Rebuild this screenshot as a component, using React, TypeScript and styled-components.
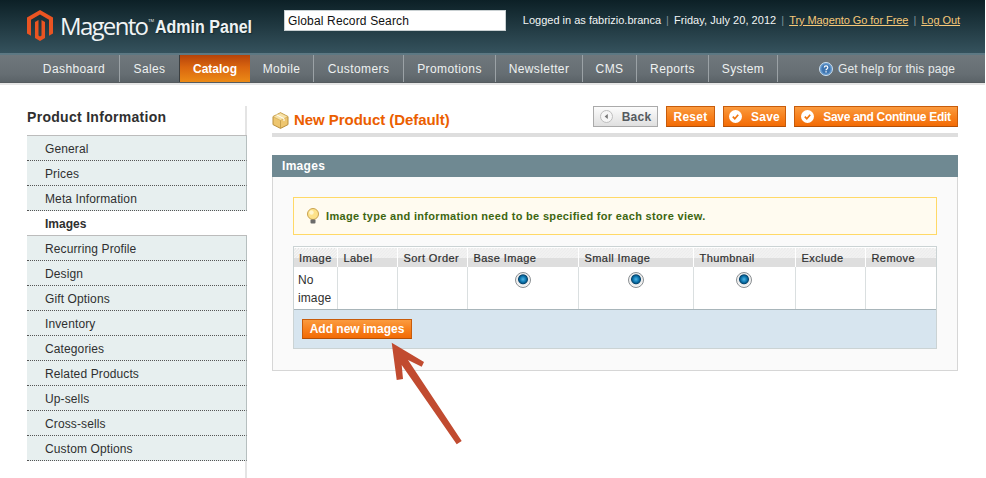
import React from 'react';
import styled, { createGlobalStyle } from 'styled-components';

const GlobalStyle = createGlobalStyle`
    html, body {
        margin: 0;
        padding: 0;
        height: 478px;
        overflow: hidden;
        background: #fff;
        font-family: 'Liberation Sans', Arial, sans-serif;
        font-size: 12px;
        color: #2f2f2f;
    }
`;

const Page = styled.div`
    position: relative;
    width: 985px;
    height: 478px;
    overflow: hidden;
`;

const Header = styled.header`
    height: 53px;
    display: flex;
    align-items: flex-start;
    padding: 0 25px 0 27px;
    background: linear-gradient(#0c2026, #35525d);
`;

const Brand = styled.div`
    width: 257px;
    flex: none;
    height: 53px;
    display: flex;
    align-items: flex-start;
    padding-top: 10px;
    box-sizing: border-box;
`;

const Wordmark = styled.span`
    width: 92px;
    flex: none;
    margin-left: 7px;
    margin-top: 1px;
    font-family: 'Open Sans', sans-serif;
    font-size: 24px;
    line-height: 30px;
    letter-spacing: -1.7px;
    color: #f1f4f5;
    white-space: nowrap;
    sup {
        font-size: 4px;
        line-height: 0;
        vertical-align: 13px;
        letter-spacing: 0;
        margin-left: 1px;
    }
`;

const PanelName = styled.span`
    margin-left: 3px;
    margin-top: 4px;
    font-size: 18px;
    line-height: 26px;
    font-weight: bold;
    color: #eef2f3;
    text-shadow: 1px 1px 1px #142a30;
    display: inline-block;
    transform: scaleX(0.89);
    transform-origin: left center;
    white-space: nowrap;
`;

const SearchBox = styled.div`
    width: 222px;
    flex: none;
    height: 21px;
    margin-top: 10px;
    box-sizing: border-box;
    padding-left: 3px;
    background: #fff;
    border: 1px solid #c9d0d2;
    color: #111;
    font-size: 12px;
    line-height: 20px;
    letter-spacing: 0.15px;
`;

const UserInfo = styled.div`
    margin-left: auto;
    margin-top: 13px;
    display: flex;
    gap: 4px;
    font-size: 11px;
    line-height: 14px;
    color: #f2f5f5;
    white-space: nowrap;
`;

const DateText = styled.span`
    letter-spacing: 0.05px;
`;

const Pipe = styled.span`
    color: #7f9198;
    padding: 0 1px;
`;

const TopLink = styled.a`
    color: #f6c878;
    text-decoration: underline;
    letter-spacing: -0.06px;
`;

const NavBar = styled.nav`
    height: 27px;
    border-top: 2px solid #5d7883;
    display: flex;
    align-items: stretch;
    padding-left: 29px;
    padding-right: 30px;
    background: linear-gradient(#6f777c, #666e73 70%, #5a6267);
    box-shadow: 0 1px 0 #555b5f, 0 3px 0 #e6e6e6;
`;

const NavItem = styled.a<{ $active?: boolean; $w: number }>`
    width: ${(p) => p.$w}px;
    box-sizing: border-box;
    display: flex;
    align-items: center;
    justify-content: center;
    font-size: 12px;
    letter-spacing: 0.4px;
    color: #eef1f1;
    border-right: 1px solid #9ba2a6;
    ${(p) =>
        p.$active &&
        `
        border-right: none;
        box-shadow: -1px 0 0 #3b3f41;
        font-weight: bold;
        color: #fff;
        letter-spacing: 0;
        background: linear-gradient(#b5430a, #d9650f 45%, #ec8a16);
    `}
`;

const HelpLink = styled.a`
    margin-left: auto;
    display: flex;
    align-items: center;
    gap: 5px;
    font-size: 12px;
    letter-spacing: 0.1px;
    color: #e6eaeb;
`;

const Body = styled.div`
    display: flex;
    height: 396px;
    padding: 24px 27px 0;
    box-sizing: border-box;
    overflow: hidden;
`;

const Sidebar = styled.aside`
    width: 220px;
    flex: none;
    height: 400px;
    border-right: 2px solid #e4e4e4;
    box-sizing: border-box;
`;

const SideTitle = styled.h3`
    margin: 0 -2px 0 0;
    height: 29px;
    font-size: 14px;
    line-height: 22px;
    font-weight: bold;
    letter-spacing: 0.3px;
    color: #2f2f2f;
    border-bottom: 1px solid #bcbcbc;
`;

const SideList = styled.ul`
    list-style: none;
    margin: 0 -2px 0 0;
    padding: 0;
`;

const SideItem = styled.li<{ $active?: boolean }>`
    height: 25px;
    box-sizing: border-box;
    padding-left: 18px;
    line-height: 26px;
    font-size: 12px;
    letter-spacing: 0.12px;
    color: #2f2f2f;
    background: #e7efef;
    border-right: 1px solid #b6bfbf;
    border-bottom: 1px dotted #555;
    ${(p) =>
        p.$active &&
        `
        background: #fff;
        font-weight: bold;
        letter-spacing: 0;
        border-right: none;
        border-bottom: 1px solid #bcbcbc;
    `}
`;

const Main = styled.main`
    width: 686px;
    flex: none;
    margin-left: 25px;
`;

const TitleRow = styled.div`
    height: 27px;
    display: flex;
    align-items: flex-start;
    border-bottom: 4px solid #dedede;
`;

const PageTitle = styled.h1`
    margin: 3px 0 0;
    display: flex;
    align-items: center;
    gap: 5px;
    font-size: 15px;
    line-height: 22px;
    font-weight: bold;
    letter-spacing: -0.05px;
    color: #eb5e00;
`;

const Actions = styled.div`
    margin-left: auto;
    display: flex;
    gap: 8px;
`;

const OrangeButton = styled.button<{ $w: number; $h?: number; $ls?: number }>`
    width: ${(p) => p.$w}px;
    height: ${(p) => p.$h ?? 21}px;
    padding: 0;
    display: flex;
    align-items: center;
    justify-content: center;
    gap: 9px;
    font-family: inherit;
    font-size: 12px;
    font-weight: bold;
    letter-spacing: ${(p) => p.$ls ?? 0.22}px;
    color: #fff;
    border: 1px solid #c85c0b;
    border-bottom-color: #b34f06;
    background: linear-gradient(#fb9b3f, #f7811e 50%, #f36b05);
`;

const GreyButton = styled(OrangeButton)`
    color: #555a5f;
    border: 1px solid #aaa;
    background: linear-gradient(#fcfcfc, #dfdfdf);
`;

const SectionHead = styled.h4`
    margin: 18px 0 0;
    height: 22px;
    padding-left: 10px;
    font-size: 12px;
    line-height: 23px;
    font-weight: bold;
    letter-spacing: 0.3px;
    color: #fff;
    background: #6f8992;
`;

const Panel = styled.section`
    height: 194px;
    box-sizing: border-box;
    padding: 20px 20px 0;
    background: #fafafa;
    border: 1px solid #d6d6d6;
    border-top: none;
`;

const Notice = styled.div`
    height: 38px;
    box-sizing: border-box;
    display: flex;
    align-items: center;
    gap: 5px;
    padding-left: 11px;
    font-size: 11px;
    font-weight: bold;
    letter-spacing: 0.32px;
    color: #3d6611;
    background: #fffbf0;
    border: 1px solid #ffd967;
`;

const ImageBox = styled.div`
    margin-top: 11px;
    height: 103px;
    box-sizing: border-box;
    border: 1px solid #cbd3d4;
    display: flex;
    flex-direction: column;
`;

const ImageTable = styled.table`
    width: 642px;
    table-layout: fixed;
    border-collapse: collapse;
    background: #fff;
    font-size: 11px;
    letter-spacing: 0.42px;
`;

const HeadCell = styled.th`
    height: 19px;
    padding: 0 0 0 6px;
    border-left: 1px solid #fff;
    border-top: 1px solid #fff;
    text-align: left;
    font-weight: normal;
    font-size: 11px;
    color: #2f2f2f;
    -webkit-text-stroke: 0.2px #2f2f2f;
    background:
        linear-gradient(#dedede, #dedede) left bottom / 100% 9px no-repeat,
        repeating-linear-gradient(135deg, #f5f5f5 0 1.06px, #e4e4e4 1.06px 2.12px);
    &:first-child {
        border-left: none;
        padding-left: 5px;
    }
`;

const BodyCell = styled.td<{ $center?: boolean }>`
    height: 42px;
    padding: ${(p) => (p.$center ? '5px 0 0 0' : '4px 0 0 4px')};
    box-sizing: border-box;
    vertical-align: top;
    border-left: 1px solid #dadfe0;
    text-align: ${(p) => (p.$center ? 'center' : 'left')};
    line-height: 18px;
    font-size: 12px;
    letter-spacing: 0.1px;
    &:first-child {
        border-left: none;
    }
`;

const Radio = styled.span`
    display: inline-block;
    width: 16px;
    height: 16px;
    box-sizing: border-box;
    border-radius: 50%;
    border: 1px solid #8a8f92;
    background: radial-gradient(circle at 50% 45%, #4fb6e6 0, #0b74ad 3px, #07466f 4.5px, #e9e9e9 5.4px, #f5f5f5 7px);
`;

const TableFooter = styled.div`
    flex: 1;
    padding: 9px 0 0 8px;
    background: #d7e5ef;
    border-top: 1px solid #a8b5ba;
`;

const Arrow = styled.svg`
    position: absolute;
    left: 385px;
    top: 338px;
`;

const CheckIcon = () => (
    <svg width="13" height="13" viewBox="0 0 13 13">
        <circle cx="6.500" cy="6.500" r="6.500" fill="#fff" />
        <path d="M3.800 6.600l2 2.100 3.400-4" fill="none" stroke="#f0760f" strokeWidth="1.700" />
    </svg>
);

const navItems = [
    { name: 'Dashboard', width: 91 },
    { name: 'Sales', width: 60 },
    { name: 'Catalog', width: 70 },
    { name: 'Mobile', width: 64 },
    { name: 'Customers', width: 90 },
    { name: 'Promotions', width: 92 },
    { name: 'Newsletter', width: 87 },
    { name: 'CMS', width: 54 },
    { name: 'Reports', width: 72 },
    { name: 'System', width: 69 },
];
const sideItems = [
    'General',
    'Prices',
    'Meta Information',
    'Images',
    'Recurring Profile',
    'Design',
    'Gift Options',
    'Inventory',
    'Categories',
    'Related Products',
    'Up-sells',
    'Cross-sells',
    'Custom Options',
];
const columns = [
    { name: 'Image', width: 43 },
    { name: 'Label', width: 60 },
    { name: 'Sort Order', width: 70 },
    { name: 'Base Image', width: 111 },
    { name: 'Small Image', width: 115 },
    { name: 'Thumbnail', width: 102 },
    { name: 'Exclude', width: 70 },
    { name: 'Remove', width: 71 },
];

export default function App() {
    return (
        <Page>
            <GlobalStyle />
            <Header>
                <Brand>
                    <svg width="26" height="31" viewBox="0 0 26 31">
                        <path
                            fill="#ea5422"
                            d="M13 0l13 7.500v16l-4 2.300v-16l-9-5.200-9 5.200v16L0 23.500v-16zM8 12l3.500-2v15.500l1.500.9 1.500-.9V10l3.500 2v16l-5 3-5-3z"
                        />
                    </svg>
                    <Wordmark>
                        Magento<sup>TM</sup>
                    </Wordmark>
                    <PanelName>Admin Panel</PanelName>
                </Brand>
                <SearchBox>Global Record Search</SearchBox>
                <UserInfo>
                    <span>Logged in as fabrizio.branca</span>
                    <Pipe>|</Pipe>
                    <DateText>Friday, July 20, 2012</DateText>
                    <Pipe>|</Pipe>
                    <TopLink>Try Magento Go for Free</TopLink>
                    <Pipe>|</Pipe>
                    <TopLink>Log Out</TopLink>
                </UserInfo>
            </Header>
            <NavBar>
                {navItems.map((item) => (
                    <NavItem key={item.name} $w={item.width} $active={item.name === 'Catalog'}>
                        {item.name}
                    </NavItem>
                ))}
                <HelpLink>
                    <svg width="14" height="14" viewBox="0 0 14 14">
                        <circle cx="7" cy="7" r="6.500" fill="#5f94c9" stroke="#cfe0f0" />
                        <circle cx="7" cy="7" r="4.500" fill="#3f75b0" />
                        <path d="M5.300 5.600c0-2.200 3.500-2.200 3.500 0 0 1.300-1.800 1.300-1.800 2.600" fill="none" stroke="#fff" strokeWidth="1.200" />
                        <rect x="6.400" y="9.200" width="1.300" height="1.300" fill="#fff" />
                    </svg>
                    Get help for this page
                </HelpLink>
            </NavBar>
            <Body>
                <Sidebar>
                    <SideTitle>Product Information</SideTitle>
                    <SideList>
                        {sideItems.map((item) => (
                            <SideItem key={item} $active={item === 'Images'}>
                                {item}
                            </SideItem>
                        ))}
                    </SideList>
                </Sidebar>
                <Main>
                    <TitleRow>
                        <PageTitle>
                            <svg width="17" height="17" viewBox="0 0 17 17">
                                <path d="M8.500.8L16 4.600v8L8.500 16.400 1 12.600v-8z" fill="#eec66f" stroke="#b98f3c" />
                                <path d="M1 4.600l7.500 3.800L16 4.600 8.500.8z" fill="#f8e3a8" stroke="#c9a24f" strokeWidth="0.600" />
                                <path d="M8.500 8.400v8" stroke="#c9a24f" fill="none" />
                                <path d="M4.500 2.800l7.500 3.800v2.500" stroke="#fff" fill="none" />
                            </svg>
                            New Product (Default)
                        </PageTitle>
                        <Actions>
                            <GreyButton $w={65}>
                                <svg width="13" height="13" viewBox="0 0 13 13">
                                    <circle cx="6.500" cy="6.500" r="6" fill="#f6f6f6" stroke="#bdbdbd" />
                                    <path d="M7.800 4v5L4.600 6.500z" fill="#777" />
                                </svg>
                                Back
                            </GreyButton>
                            <OrangeButton $w={49}>Reset</OrangeButton>
                            <OrangeButton $w={63}>
                                <CheckIcon />
                                Save
                            </OrangeButton>
                            <OrangeButton $w={164} $ls={-0.3}>
                                <CheckIcon />
                                Save and Continue Edit
                            </OrangeButton>
                        </Actions>
                    </TitleRow>
                    <SectionHead>Images</SectionHead>
                    <Panel>
                        <Notice>
                            <svg width="16" height="16" viewBox="0 0 16 16">
                                <circle cx="8" cy="6" r="5.500" fill="#fde28a" stroke="#c9a24f" />
                                <circle cx="6.500" cy="4.500" r="2.200" fill="#fff6cf" />
                                <rect x="5.500" y="11.500" width="5" height="4" rx="1" fill="#6b6b6b" />
                            </svg>
                            Image type and information need to be specified for each store view.
                        </Notice>
                        <ImageBox>
                            <ImageTable>
                                <colgroup>
                                    {columns.map((col) => (
                                        <col key={col.name} width={col.width} />
                                    ))}
                                </colgroup>
                                <thead>
                                    <tr>
                                        {columns.map((col) => (
                                            <HeadCell key={col.name}>{col.name}</HeadCell>
                                        ))}
                                    </tr>
                                </thead>
                                <tbody>
                                    <tr>
                                        <BodyCell>No image</BodyCell>
                                        <BodyCell />
                                        <BodyCell />
                                        <BodyCell $center>
                                            <Radio />
                                        </BodyCell>
                                        <BodyCell $center>
                                            <Radio />
                                        </BodyCell>
                                        <BodyCell $center>
                                            <Radio />
                                        </BodyCell>
                                        <BodyCell />
                                        <BodyCell />
                                    </tr>
                                </tbody>
                            </ImageTable>
                            <TableFooter>
                                <OrangeButton $w={110} $h={20} $ls={0}>Add new images</OrangeButton>
                            </TableFooter>
                        </ImageBox>
                    </Panel>
                </Main>
            </Body>
            <Arrow width="80" height="110" viewBox="385 338 80 110">
                <polygon
                    fill="#c14b30"
                    points="391.700,342.700 424,362 421.700,366.700 408,360 461.700,441 456.700,444.300 401.700,365 403,379 396.700,380"
                />
            </Arrow>
        </Page>
    );
}
